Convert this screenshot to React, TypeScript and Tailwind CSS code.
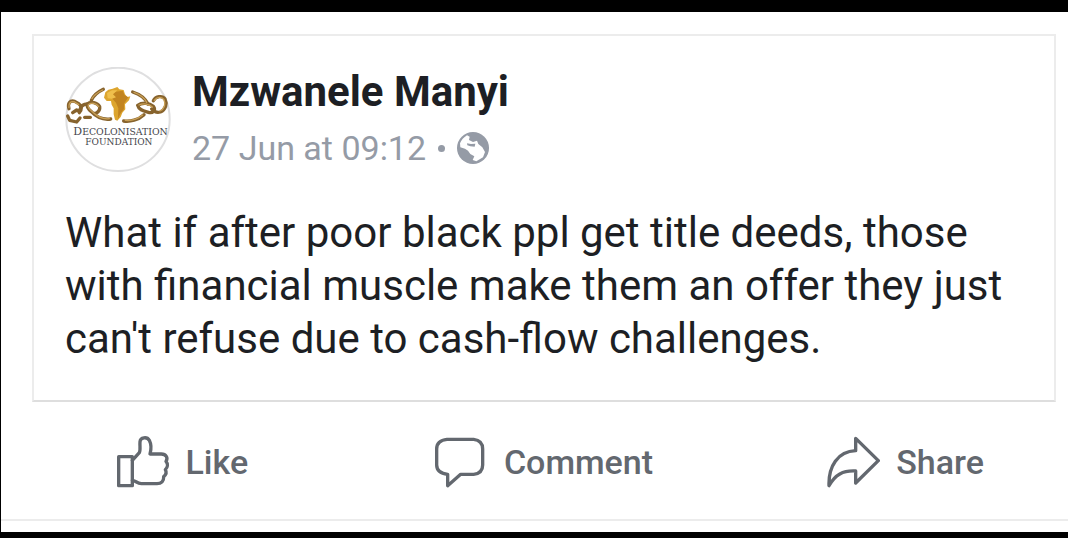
import type { ReactNode } from "react";

const post = {
  author: "Mzwanele Manyi",
  date: "27 Jun at 09:12",
  body: "What if after poor black ppl get title deeds, those with financial muscle make them an offer they just can't refuse due to cash-flow challenges.",
};

function Avatar() {
  return (
    <svg viewBox="27 21 318 318" className="size-[106px] shrink-0" role="img" aria-label="Decolonisation Foundation">
      <circle cx="186" cy="178" r="155" fill="#fff" stroke="#dfdfe0" strokeWidth="6" />
      <g fill="none" strokeLinecap="round" strokeLinejoin="round">
        <g stroke="#87632d" strokeWidth="10">
          <path d="M106 121C113 106 127 95 142 88" />
          <path d="M230 96C252 103 268 115 276 132" />
          <path d="M203 183C222 186 247 180 264 164" />
          <path d="M39 146C34 130 42 120 56 124L68 131C78 138 78 150 70 158" />
          <path d="M35 168L41 181L62 186L72 174" />
          <path d="M50 158L62 150L70 155" />
          <path d="M86 172H103" />
          <path d="M164 177C143 180 122 172 106 155C96 147 92 139 94 132C104 123 124 128 131 140C133 152 122 162 113 160" />
          <path d="M94 132C82 132 74 140 71 150" />
          <path d="M245 136C260 126 280 129 292 139C301 151 290 161 277 157C263 153 249 151 245 136" />
          <path d="M292 122C299 109 319 105 327 117C334 131 329 149 313 156C302 159 292 153 287 147" />
        </g>
        <g stroke="#c9a057" strokeWidth="4">
          <path d="M108 116C115 104 127 96 140 90" />
          <path d="M234 97C254 104 266 115 272 127" />
          <path d="M208 181C226 183 245 177 260 165" />
          <path d="M39 142C37 130 44 122 56 126L68 134" />
          <path d="M160 176C143 178 124 170 110 156C100 148 95 140 97 134C106 126 122 130 128 140" />
          <path d="M249 135C262 129 279 132 289 141" />
          <path d="M295 121C302 111 317 108 324 119C330 132 325 147 312 153" />
        </g>
      </g>
      <path
        d="M148 97L157 89L170 86L184 81L190 88L203 90L207 103L214 111L223 109L219 121L207 133L208 148L199 158L194 171L184 182L177 179L173 163L173 145L167 134L165 123L152 123L144 113Z"
        fill="#dda52e"
      />
      <path d="M180 95L200 92L206 106L217 112L204 131L204 147L194 160L186 176L187 145L180 128L169 116L163 104Z" fill="#c28420" />
      <path d="M153 99L168 91L184 91L171 103L180 112L168 116L155 115Z" fill="#efbf4c" />
      <g className="font-['DejaVu_Serif',serif]" fill="#45454b">
        <text x="52" y="224" fontSize="33">
          D<tspan fontSize="28">ECOLONISATION</tspan>
        </text>
        <text x="88" y="254" fontSize="27">
          FOUNDATION
        </text>
      </g>
    </svg>
  );
}

function GlobeIcon() {
  return (
    <svg viewBox="0 0 96 96" className="size-8 shrink-0" role="img" aria-label="Public">
      <circle cx="48" cy="48" r="48" fill="#959ba6" />
      <path
        d="M9 34C13 24 20 16 30 10L38 14L36 24L48 30L60 26L64 36L76 46L84 60L78 76L58 88L47 84L52 73L40 66L33 56L24 50L10 46Z"
        fill="#fff"
      />
      <path d="M30 34L42 36L55 35L53 44L40 43L31 40Z" fill="#959ba6" />
    </svg>
  );
}

function ActionButton({ label, viewBox, children }: { label: string; viewBox: string; children: ReactNode }) {
  return (
    <button type="button" className="flex cursor-pointer items-center justify-center gap-4">
      <svg
        viewBox={viewBox}
        className="size-[54px] shrink-0"
        fill="none"
        stroke="currentColor"
        strokeWidth="10"
        strokeLinejoin="round"
        strokeLinecap="round"
        aria-hidden="true"
      >
        {children}
      </svg>
      <span>{label}</span>
    </button>
  );
}

export default function App() {
  return (
    <div className="overflow-hidden border-t-12 border-b-6 border-l border-black bg-white font-[Roboto,sans-serif]">
      <article className="mt-[22px] mr-3 ml-[31px] border-2 border-[#ececec] border-b-[#dedede] px-[31px] pt-7 pb-[35px]">
        <header className="flex items-center gap-[21px]">
          <Avatar />
          <div className="min-w-0">
            <h1 className="text-[42px] leading-14 font-bold text-[#1d1f24]">{post.author}</h1>
            <p className="flex items-center gap-3 text-[34px] leading-14 text-[#959ba6]">
              <span>{post.date}</span>
              <span className="size-[7px] rounded-full bg-[#959ba6]" />
              <GlobeIcon />
            </p>
          </div>
        </header>
        <p className="mt-[30px] text-[42px] leading-[53px] text-[#1d1f24]">{post.body}</p>
      </article>

      <div className="-mr-[18px] grid grid-cols-3 border-b-2 border-[#ececec] pt-[33px] pb-[30px] text-[34px] leading-[54px] font-medium text-[#63686f]">
        <ActionButton label="Like" viewBox="42 42 162 162">
          <path d="M50 107H91V194H50Z" />
          <path d="M91 118L112 95C116 88 113 75 114 62C115 49 135 46 142 58C148 70 148 85 144 99H178C192 99 199 110 192 121C199 129 197 139 190 146C195 155 190 163 185 167C186 180 178 188 165 188H118C105 188 100 178 91 178" />
        </ActionButton>
        <ActionButton label="Comment" viewBox="46 48 162 162">
          <path d="M85 61H165Q192 64 192 90V138Q192 163 165 166H126L87 200V166Q54 162 54 138V90Q54 64 85 61Z" />
        </ActionButton>
        <ActionButton label="Share" viewBox="50 46 162 162">
          <path d="M139 56L207 123L139 190V154C100 152 78 165 59 198C57 140 85 95 139 93Z" />
        </ActionButton>
      </div>
      <div className="h-[11px]" />
    </div>
  );
}
